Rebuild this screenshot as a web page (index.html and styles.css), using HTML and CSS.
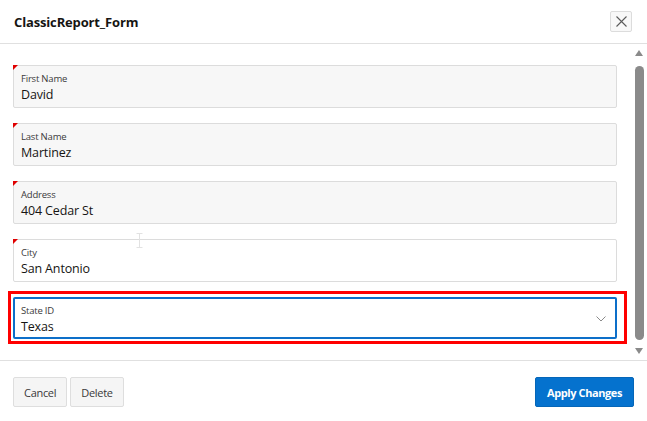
FILE: index.html
```html
<!DOCTYPE html>
<html>
<head>
<meta charset="utf-8">
<link rel="stylesheet" href="styles.css">
</head>
<body>
<div class="dialog">
  <div class="header">
    <h1 class="title">ClassicReport_Form</h1>
    <button class="close" aria-label="Close">
      <svg width="11" height="11" viewBox="0 0 11 11"><path d="M0.5 0.5L10.5 10.5M10.5 0.5L0.5 10.5" stroke="#5a5a5a" stroke-width="1.1" fill="none"/></svg>
    </button>
  </div>
  <div class="body">
    <div class="content">
      <div class="field required filled">
        <label>First Name</label>
        <div class="value">David</div>
      </div>
      <div class="field required filled">
        <label>Last Name</label>
        <div class="value">Martinez</div>
      </div>
      <div class="field required filled">
        <label>Address</label>
        <div class="value">404 Cedar St</div>
      </div>
      <div class="field required">
        <label>City</label>
        <div class="value">San Antonio</div>
      </div>
      <div class="highlight">
        <div class="field focused">
          <label>State ID</label>
          <div class="value">Texas</div>
          <svg class="chevron" width="10" height="6" viewBox="0 0 10 6"><path d="M0.5 0.5L5 5L9.5 0.5" stroke="#8a8a8a" stroke-width="1" fill="none"/></svg>
        </div>
      </div>
      <svg class="ibeam" width="7" height="15" viewBox="0 0 7 15"><path d="M0.5 0.5H6.5M3.5 0.5V14.5M0.5 14.5H6.5" stroke="#e2e2e2" stroke-width="1" fill="none"/></svg>
    </div>
    <div class="scrollbar">
      <div class="arrow up"></div>
      <div class="thumb"></div>
      <div class="arrow down"></div>
    </div>
  </div>
  <div class="footer">
    <div class="left">
      <button class="btn">Cancel</button>
      <button class="btn">Delete</button>
    </div>
    <button class="btn primary">Apply Changes</button>
  </div>
</div>
</body>
</html>
```
FILE: styles.css
```css
* { box-sizing: border-box; }
html, body { margin: 0; padding: 0; background: #fff; }
body { font-family: "Open Sans", "Noto Sans", sans-serif; color: #161513; }
.dialog { width: 647px; height: 421px; display: flex; flex-direction: column; background: #fff; }
.header { height: 44px; border-bottom: 1px solid #e0e0e0; display: flex; align-items: center; justify-content: space-between; padding: 0 15px 0 14px; flex: none; }
.title { margin: 0; font-size: 13px; font-weight: 700; letter-spacing: -0.15px; color: #161513; }
.close { width: 22px; height: 21px; border: 1px solid #dcdcdc; background: #f8f8f8; border-radius: 2px; padding: 0; display: flex; align-items: center; justify-content: center; margin-top: -1px; }
.body { height: 317px; display: flex; flex: none; border-bottom: 1px solid #e0e0e0; }
.content { flex: 1; padding: 21px 16px 0 13px; position: relative; display: flex; flex-direction: column; gap: 15px; }
.field { position: relative; height: 43px; border: 1px solid #dcdcdc; border-radius: 2px; background: #fff; padding: 6px 7px 0 7px; }
.field.filled { background: #f7f7f7; }
.field.required::before { content: ""; position: absolute; left: -1px; top: -1px; width: 0; height: 0; border-top: 5px solid #e00000; border-right: 5px solid transparent; }
.field label { display: block; font-size: 9.5px; line-height: 13px; color: #3a3a3a; letter-spacing: -0.2px; }
.field .value { font-size: 12.5px; line-height: 18px; margin-top: 1px; color: #161513; letter-spacing: -0.15px; }
.highlight { position: relative; }
.highlight::after { content: ""; position: absolute; left: -5px; top: -6px; right: -10px; bottom: -5px; border: 3px solid #ff0000; pointer-events: none; }
.field.focused { border: 2px solid #0d6fc9; height: 42px; padding: 5px 6px 0 6px; }
.chevron { position: absolute; right: 9px; top: 17px; }
.ibeam { position: absolute; left: 136px; top: 189px; }
.scrollbar { width: 14px; display: flex; flex-direction: column; align-items: center; padding: 6px 0 6px 0; flex: none; }
.arrow { width: 0; height: 0; border-left: 4px solid transparent; border-right: 4px solid transparent; }
.arrow.up { border-bottom: 6px solid #8a8a8a; margin-bottom: 10px; margin-right: 2px; }
.arrow.down { border-top: 6px solid #8a8a8a; margin-top: 8px; margin-right: 2px; }
.thumb { width: 9px; flex: 1; background: #8a8a8a; border-radius: 5px; margin-right: 2px; }
.footer { flex: 1; display: flex; justify-content: space-between; align-items: flex-start; padding: 16px 13px 0 13px; }
.left { display: flex; gap: 3px; }
.btn { height: 30px; border: 1px solid #dedede; background: #f5f5f5; border-radius: 2px; font-family: "Open Sans", "Noto Sans", sans-serif; font-size: 11px; color: #3a3a3a; padding: 0 10px; letter-spacing: -0.3px; white-space: nowrap; }
.btn.primary { background: #0572ce; border-color: #0566b8; color: #fff; font-weight: 700; padding: 0; width: 99px; letter-spacing: -0.4px; }
```
